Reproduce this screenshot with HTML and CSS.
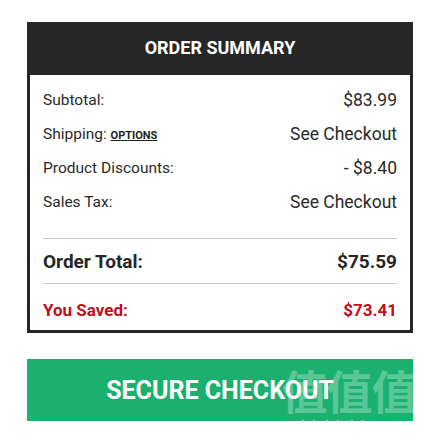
FILE: index.html
```html
<!DOCTYPE html>
<html lang="en">
<head>
    <meta charset="UTF-8">
    <meta name="viewport" content="width=device-width, initial-scale=1.0">
    <link rel="stylesheet" href="styles.css">
    <title>Order Summary</title>
</head>
<body>
    <section class="summary">
        <h2 class="summary-title">ORDER SUMMARY</h2>
        <div class="summary-body">
            <div class="row">
                <span class="label">Subtotal:</span>
                <span class="value">$83.99</span>
            </div>
            <div class="row">
                <span class="label">Shipping: <a href="#" class="options">OPTIONS</a></span>
                <span class="value">See Checkout</span>
            </div>
            <div class="row">
                <span class="label">Product Discounts:</span>
                <span class="value">- $8.40</span>
            </div>
            <div class="row">
                <span class="label">Sales Tax:</span>
                <span class="value">See Checkout</span>
            </div>
            <div class="row total">
                <span>Order Total:</span>
                <span>$75.59</span>
            </div>
            <div class="row saved">
                <span>You Saved:</span>
                <span>$73.41</span>
            </div>
        </div>
    </section>

    <div class="checkout-wrap">
        <button class="checkout">SECURE CHECKOUT</button>
        <div class="watermark">
            <span class="wm-chars">值值值</span>
            <span class="wm-site">zhizhizhi.com</span>
        </div>
    </div>
</body>
</html>
```

FILE: styles.css
```css
body {
    margin: 0;
    font-family: Roboto, "Liberation Sans", Arial, sans-serif;
    color: #222;
    background: #fff;
}

.summary {
    margin: 22px 15px 0 27px;
    border: 3px solid #262626;
    border-top: 0;
}

.summary-title {
    margin: 0;
    height: 53px;
    line-height: 52px;
    background-color: #262626;
    color: #fff;
    font-size: 18px;
    font-weight: 700;
    text-align: center;
}

.summary-body {
    padding: 8px 13px 0;
}

.row {
    display: flex;
    justify-content: space-between;
    align-items: center;
    height: 34px;
}

.label {
    font-size: 15.5px;
    color: #2a2a2a;
}

.value {
    font-size: 17.5px;
    color: #2a2a2a;
}

.options {
    color: #222;
    font-size: 11px;
    font-weight: 700;
    text-decoration: underline;
}

.total {
    margin-top: 19px;
    height: 44px;
    border-top: 1px solid #c4c4c4;
    border-bottom: 1px solid #c4c4c4;
    font-size: 19px;
    font-weight: 700;
    color: #262626;
}

.saved {
    height: 40px;
    padding-top: 6px;
    font-size: 17px;
    font-weight: 700;
    color: #c20e1a;
}

.checkout-wrap {
    position: relative;
    margin: 26px 15px 0 27px;
}

.checkout {
    display: block;
    width: 100%;
    height: 62px;
    border: 0;
    background-color: #1bb06e;
    color: #fff;
    font-family: Roboto, "Liberation Sans", Arial, sans-serif;
    font-size: 25px;
    font-weight: 700;
}

/* marca d'agua por cima do botao */
.watermark {
    position: absolute;
    left: 251px;
    top: 6px;
    width: 142px;
    text-align: center;
    pointer-events: none;
}

.wm-chars {
    display: block;
    font-family: "Noto Sans CJK SC", sans-serif;
    font-size: 46px;
    font-weight: 700;
    line-height: 48px;
    letter-spacing: -1px;
    color: rgba(255, 255, 255, 0.28);
}

.wm-site {
    display: block;
    margin-top: 6px;
    font-family: "DejaVu Sans", sans-serif;
    font-size: 17px;
    line-height: 18px;
    color: #d8d8d8;
}
```
